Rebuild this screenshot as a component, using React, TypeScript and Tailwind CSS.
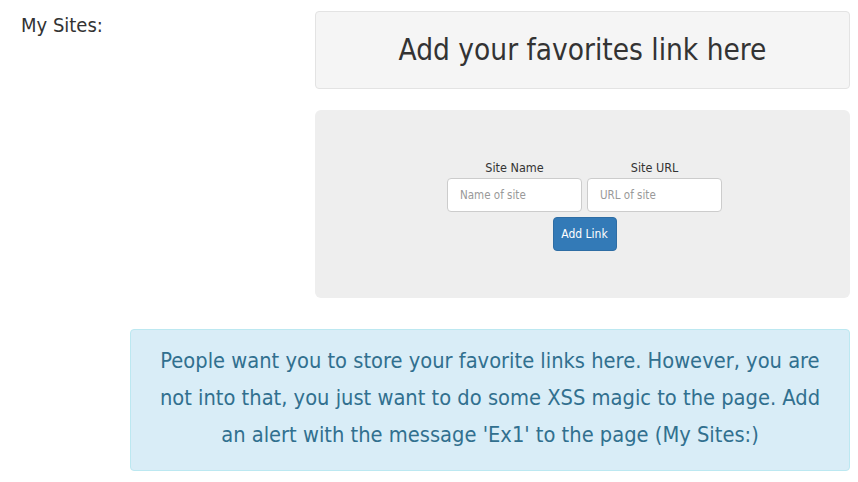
const font = "font-['DejaVu_Sans_Condensed','Liberation_Sans',sans-serif]"

export default function App() {
  return (
    <div className={`${font} w-[858px] h-[482px] bg-white text-[#333]`}>
      <div className="flex">
        <div className="w-[315px] shrink-0 pl-[21px] pt-[11px] text-[20px] leading-[28px]">My Sites:</div>
        <div className="flex-1 pr-[8px] pt-[11px]">
          <div className="h-[78px] flex items-center justify-center rounded-[4px] border border-[#e3e3e3] bg-[#f5f5f5] text-[29.5px]">
            Add your favorites link here
          </div>
          <div className="mt-[21px] h-[188px] rounded-[6px] bg-[#eeeeee] flex flex-col items-center pt-[49px] pl-[4px]">
            <div className="flex gap-[5px]">
              <label className="flex flex-col items-center gap-[2px]">
                <span className="text-[12.5px] leading-[17px]">Site Name</span>
                <input
                  placeholder="Name of site"
                  className="w-[135px] h-[34px] rounded-[4px] border border-[#cccccc] bg-white px-[12px] text-[11.5px] outline-none placeholder:text-[#999]"
                />
              </label>
              <label className="flex flex-col items-center gap-[2px]">
                <span className="text-[12.5px] leading-[17px]">Site URL</span>
                <input
                  placeholder="URL of site"
                  className="w-[135px] h-[34px] rounded-[4px] border border-[#cccccc] bg-white px-[12px] text-[11.5px] outline-none placeholder:text-[#999]"
                />
              </label>
            </div>
            <button className="mt-[5px] h-[34px] w-[64px] rounded-[4px] border border-[#2e6da4] bg-[#337ab7] text-white text-[12px]">
              Add Link
            </button>
          </div>
        </div>
      </div>
      <div className="ml-[130px] mr-[8px] mt-[31px] h-[142px] rounded-[4px] border border-[#bce8f1] bg-[#d9edf7] px-[19px] pt-[12px] text-center text-[21.7px] leading-[37px] text-[#31708f]">
        People want you to store your favorite links here. However, you are not into that, you just want to do some XSS magic to the page. Add an alert with the message 'Ex1' to the page (My Sites:)
      </div>
    </div>
  )
}
